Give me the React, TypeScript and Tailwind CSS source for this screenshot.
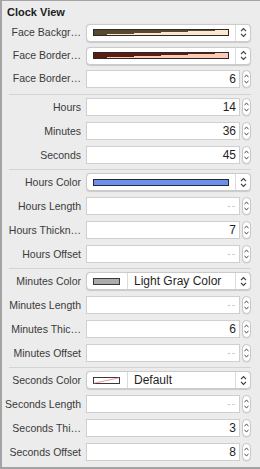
import React from 'react';

type Row =
  | { kind: 'well'; label: string; swatch: string }
  | { kind: 'named'; label: string; swatch: React.ReactNode; name: string }
  | { kind: 'number'; label: string; value?: string };

const UpDown = () => (
  <svg width="7" height="11" viewBox="0 0 7 11" fill="none">
    <path d="M1 4.2 L3.5 1.6 L6 4.2" stroke="#3a3a3a" strokeWidth="1.1" />
    <path d="M1 6.8 L3.5 9.4 L6 6.8" stroke="#3a3a3a" strokeWidth="1.1" />
  </svg>
);

const Stepper = () => (
  <div className="ml-[2px] w-[9px] h-[18px] rounded-full bg-white border border-[#c6c6c6] flex flex-col items-center justify-center gap-[2px] shadow-[0_0.5px_0.5px_rgba(0,0,0,0.12)]">
    <svg width="5" height="4" viewBox="0 0 5 4" fill="none">
      <path d="M0.5 3.3 L2.5 0.9 L4.5 3.3" stroke="#444" strokeWidth="0.9" />
    </svg>
    <svg width="5" height="4" viewBox="0 0 5 4" fill="none">
      <path d="M0.5 0.7 L2.5 3.1 L4.5 0.7" stroke="#444" strokeWidth="0.9" />
    </svg>
  </div>
);

const Popup = ({ children }: { children: React.ReactNode }) => (
  <div className="w-[165px] h-[18px] rounded-[4px] bg-white border border-[#cbcbcb] shadow-[0_0.5px_1px_rgba(0,0,0,0.15)] flex">
    <div className="flex-1 flex items-center min-w-0">{children}</div>
    <div className="w-[15px] border-l border-[#dadada] flex items-center justify-center">
      <UpDown />
    </div>
  </div>
);

const NumberField = ({ value }: { value?: string }) => (
  <div className="flex items-center">
    <div className="w-[154px] h-[18px] bg-white border border-[#cfcfcf] flex items-center justify-end pr-[3px]">
      {value ? (
        <span className="text-[12px] text-[#1f1f1f] leading-none">{value}</span>
      ) : (
        <span className="text-[10px] text-[#c4c4c4] leading-none tracking-[1px]">--</span>
      )}
    </div>
    <Stepper />
  </div>
);

const Separator = () => <div className="ml-[7px] w-[242px] h-px bg-[#d3d3d3]" />;

const Field = ({ row }: { row: Row }) => {
  if (row.kind === 'well') {
    return (
      <Popup>
        <div className="pl-[6px] pr-[6px] w-full">
          <div className={`h-[7px] border border-[#2a2a2a] ${row.swatch}`} />
        </div>
      </Popup>
    );
  }
  if (row.kind === 'named') {
    return (
      <Popup>
        <div className="w-[41px] h-full border-r border-[#dadada] flex items-center pl-[6px]">
          {row.swatch}
        </div>
        <span className="pl-[6px] text-[12px] text-[#1f1f1f] leading-none">{row.name}</span>
      </Popup>
    );
  }
  return <NumberField value={row.value} />;
};

const RowView = ({ row, h }: { row: Row; h: string }) => (
  <div className={`flex items-center ${h}`}>
    <div className="w-[79px] text-right text-[10.5px] text-[#3a3a3a] whitespace-nowrap leading-none">
      {row.label}
    </div>
    <div className="ml-[5px]">
      <Field row={row} />
    </div>
  </div>
);

const groups: Row[][] = [
  [
    { kind: 'well', label: 'Face Backgr…', swatch: 'bg-[linear-gradient(to_bottom_right,#594a2c_50%,#fde8cf_50%)]' },
    { kind: 'well', label: 'Face Border…', swatch: 'bg-[linear-gradient(to_bottom_right,#5b1c12_50%,#fdc9b7_50%)]' },
    { kind: 'number', label: 'Face Border…', value: '6' },
  ],
  [
    { kind: 'number', label: 'Hours', value: '14' },
    { kind: 'number', label: 'Minutes', value: '36' },
    { kind: 'number', label: 'Seconds', value: '45' },
  ],
  [
    { kind: 'well', label: 'Hours Color', swatch: 'bg-[#6d8ff0]' },
    { kind: 'number', label: 'Hours Length' },
    { kind: 'number', label: 'Hours Thickn…', value: '7' },
    { kind: 'number', label: 'Hours Offset' },
  ],
  [
    {
      kind: 'named',
      label: 'Minutes Color',
      name: 'Light Gray Color',
      swatch: <div className="w-[27px] h-[7px] bg-[#ababab] border border-[#3a3a3a]" />,
    },
    { kind: 'number', label: 'Minutes Length' },
    { kind: 'number', label: 'Minutes Thic…', value: '6' },
    { kind: 'number', label: 'Minutes Offset' },
  ],
  [
    {
      kind: 'named',
      label: 'Seconds Color',
      name: 'Default',
      swatch: (
        <svg width="27" height="7" viewBox="0 0 27 7">
          <rect x="0.5" y="0.5" width="26" height="6" fill="#fff" stroke="#3a3a3a" />
          <line x1="1" y1="6.2" x2="26" y2="0.8" stroke="#f07a7a" strokeWidth="0.8" />
        </svg>
      ),
    },
    { kind: 'number', label: 'Seconds Length' },
    { kind: 'number', label: 'Seconds Thi…', value: '3' },
    { kind: 'number', label: 'Seconds Offset', value: '8' },
  ],
];

export default function App() {
  return (
    <div className="w-[260px] h-[469px] overflow-hidden bg-[#ececec] border-l-2 border-t border-b-2 border-[#a4a4a4] font-['Liberation_Sans',Arial,sans-serif]">
      <div className="h-[20px] pl-[5px] pt-[6px] text-[11px] font-bold text-[#1c1c1c] leading-none">
        Clock View
      </div>
      {groups.map((rows, gi) => (
        <div key={gi}>
          {gi > 0 && <Separator />}
          <div className={gi === 0 ? 'pb-[4px]' : 'pb-[2px]'}>
            {rows.map((row, ri) => (
              <RowView key={ri} row={row} h={gi === 0 ? 'h-[23px]' : 'h-6'} />
            ))}
          </div>
        </div>
      ))}
    </div>
  );
}
